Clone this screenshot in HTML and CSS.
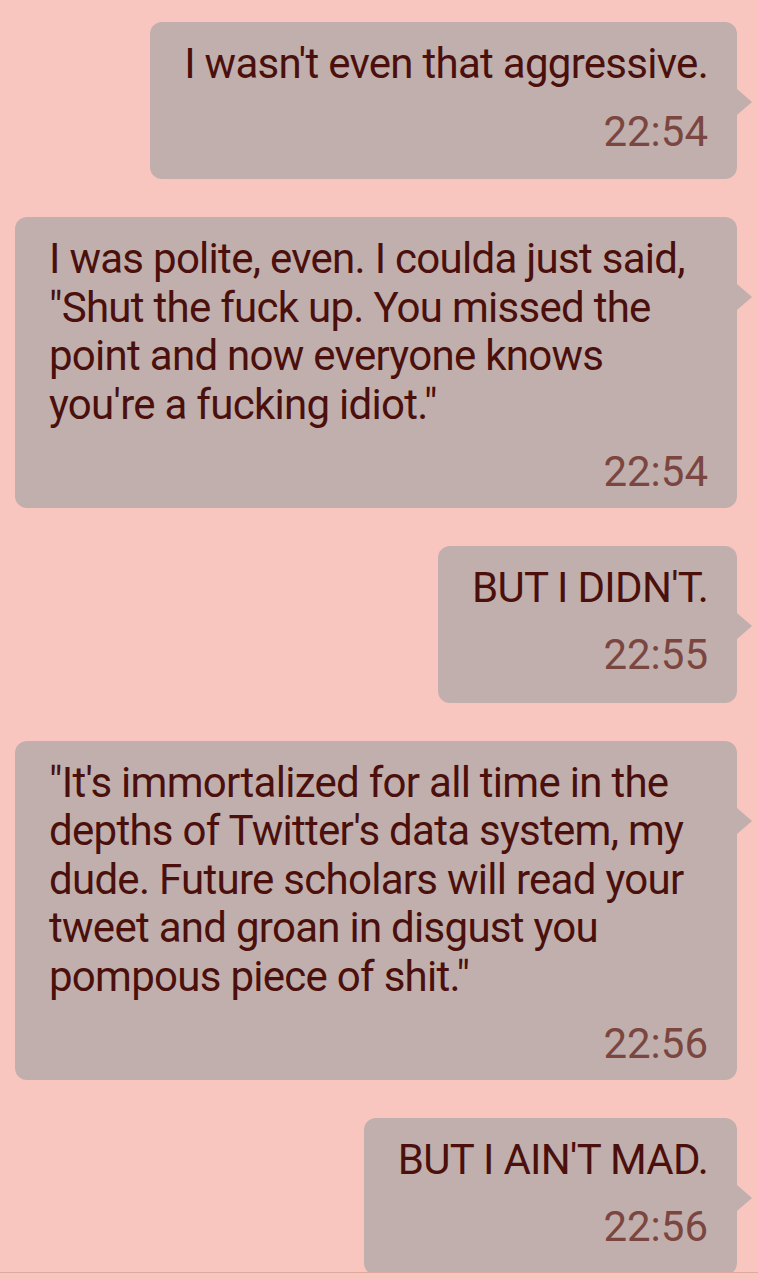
FILE: index.html
```html
<!DOCTYPE html>
<html lang="en">
<head>
    <meta charset="UTF-8">
    <meta name="viewport" content="width=device-width, initial-scale=1.0">
    <title>Messages</title>
    <link rel="stylesheet" href="styles.css">
</head>
<body>
    <div class="chat">
        <!-- messaggi inviati -->
        <div class="msg short">
            <p class="text">I wasn't even that aggressive.</p>
            <span class="time">22:54</span>
        </div>

        <div class="msg wide long">
            <p class="text">I was polite, even. I coulda just said, "Shut the fuck up. You missed the point and now everyone knows you're a fucking idiot."</p>
            <span class="time">22:54</span>
        </div>

        <div class="msg short">
            <p class="text">BUT I DIDN'T.</p>
            <span class="time">22:55</span>
        </div>

        <div class="msg wide long">
            <p class="text">"It's immortalized for all time in the depths of Twitter's data system, my dude. Future scholars will read your tweet and groan in disgust you pompous piece of shit."</p>
            <span class="time">22:56</span>
        </div>

        <div class="msg short">
            <p class="text">BUT I AIN'T MAD.</p>
            <span class="time">22:56</span>
        </div>
    </div>
</body>
</html>
```

FILE: styles.css
```css
body { font-family: Roboto, "Liberation Sans", sans-serif; background-color: #f8c6be; margin: 0; padding: 0; }
.chat { box-sizing: border-box; height: 1273px; overflow: hidden; padding: 22px 21px 0 15px; border-bottom: 1px solid #dea89f; display: flex; flex-direction: column; align-items: flex-end; gap: 38px; }
.msg { position: relative; flex-shrink: 0; background: #c1afad; border-radius: 12px; padding: 18px 29px 23px 34px; display: flex; flex-direction: column; align-items: flex-end; font-size: 42px; line-height: 48.5px; }
.msg::after { content: ""; position: absolute; right: -15px; top: 67px; border-left: 15px solid #c1afad; border-top: 13px solid transparent; border-bottom: 13px solid transparent; }
.msg.wide { align-self: stretch; align-items: stretch; }
.msg.long { padding-bottom: 11px; }
.text { margin: 0; color: #4b100c; letter-spacing: -0.72px; }
.time { margin-top: 19px; color: #7b463f; text-align: right; }
```
